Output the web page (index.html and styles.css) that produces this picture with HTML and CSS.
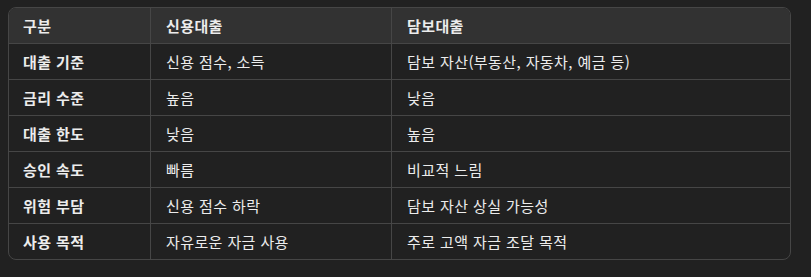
FILE: index.html
```html
<!DOCTYPE html>
<html lang="ko">
<head>
<meta charset="utf-8">
<link rel="stylesheet" href="styles.css">
</head>
<body>
<table class="cmp">
  <colgroup>
    <col class="c1"><col class="c2"><col class="c3">
  </colgroup>
  <thead>
    <tr><th>구분</th><th>신용대출</th><th>담보대출</th></tr>
  </thead>
  <tbody>
    <tr><td class="k">대출 기준</td><td>신용 점수, 소득</td><td>담보 자산(부동산, 자동차, 예금 등)</td></tr>
    <tr><td class="k">금리 수준</td><td>높음</td><td>낮음</td></tr>
    <tr><td class="k">대출 한도</td><td>낮음</td><td>높음</td></tr>
    <tr><td class="k">승인 속도</td><td>빠름</td><td>비교적 느림</td></tr>
    <tr><td class="k">위험 부담</td><td>신용 점수 하락</td><td>담보 자산 상실 가능성</td></tr>
    <tr><td class="k">사용 목적</td><td>자유로운 자금 사용</td><td>주로 고액 자금 조달 목적</td></tr>
  </tbody>
</table>
</body>
</html>
```
FILE: styles.css
```css
html, body {
  background: #212121;
}
body {
  margin: 7px 8px;
  font-family: "Noto Sans CJK KR", "Noto Sans", sans-serif;
  font-size: 15px;
  letter-spacing: 0.4px;
  color: #ececec;
}
.cmp {
  width: 783px;
  border-collapse: separate;
  border-spacing: 0;
  table-layout: fixed;
  border: 1px solid #464646;
  border-radius: 8px;
  overflow: hidden;
}
.c1 { width: 141px; }
.c2 { width: 241px; }
.c3 { width: auto; }
.cmp th, .cmp td {
  padding: 0 14px 0 15px;
  text-align: left;
  vertical-align: middle;
  border-left: 1px solid #464646;
  border-top: 1px solid #464646;
  line-height: 20px;
  box-sizing: border-box;
}
.cmp th:first-child, .cmp td:first-child {
  border-left: none;
  padding-left: 14px;
}
.cmp thead th {
  border-top: none;
  background: #323232;
  font-weight: 700;
  height: 35px;
}
.cmp td {
  height: 36px;
  font-weight: 400;
}
.cmp td.k {
  font-weight: 700;
}
```
